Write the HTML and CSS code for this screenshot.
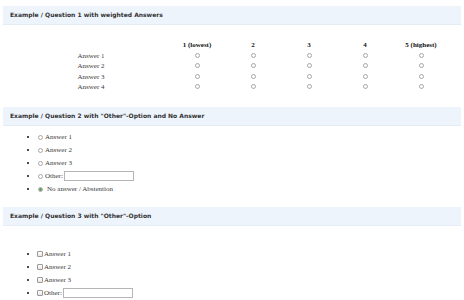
FILE: index.html
```html
<!DOCTYPE html>
<html lang="en">
<head>
  <meta charset="UTF-8">
  <meta name="viewport" content="width=device-width, initial-scale=1.0">
  <title>Survey example</title>
  <link rel="stylesheet" href="styles.css">
</head>
<body>
  <div class="page">
    <div class="question">
      <div class="q-title">Example / Question 1 with weighted Answers</div>
      <table class="matrix">
        <tr>
          <th></th>
          <th>1 (lowest)</th>
          <th>2</th>
          <th>3</th>
          <th>4</th>
          <th>5 (highest)</th>
        </tr>
        <tr>
          <td class="answer">Answer 1</td>
          <td><input type="radio" name="q1a1"></td>
          <td><input type="radio" name="q1a1"></td>
          <td><input type="radio" name="q1a1"></td>
          <td><input type="radio" name="q1a1"></td>
          <td><input type="radio" name="q1a1"></td>
        </tr>
        <tr>
          <td class="answer">Answer 2</td>
          <td><input type="radio" name="q1a2"></td>
          <td><input type="radio" name="q1a2"></td>
          <td><input type="radio" name="q1a2"></td>
          <td><input type="radio" name="q1a2"></td>
          <td><input type="radio" name="q1a2"></td>
        </tr>
        <tr>
          <td class="answer">Answer 3</td>
          <td><input type="radio" name="q1a3"></td>
          <td><input type="radio" name="q1a3"></td>
          <td><input type="radio" name="q1a3"></td>
          <td><input type="radio" name="q1a3"></td>
          <td><input type="radio" name="q1a3"></td>
        </tr>
        <tr>
          <td class="answer">Answer 4</td>
          <td><input type="radio" name="q1a4"></td>
          <td><input type="radio" name="q1a4"></td>
          <td><input type="radio" name="q1a4"></td>
          <td><input type="radio" name="q1a4"></td>
          <td><input type="radio" name="q1a4"></td>
        </tr>
      </table>
    </div>

    <div class="question">
      <div class="q-title">Example / Question 2 with "Other"-Option and No Answer</div>
      <ul class="options">
        <li><label><input type="radio" name="q2">Answer 1</label></li>
        <li><label><input type="radio" name="q2">Answer 2</label></li>
        <li><label><input type="radio" name="q2">Answer 3</label></li>
        <li><label><input type="radio" name="q2">Other:</label><input type="text" class="other-text"></li>
        <li><label class="no-answer"><input type="radio" name="q2" checked>No answer / Abstention</label></li>
      </ul>
    </div>

    <div class="question">
      <div class="q-title">Example / Question 3 with "Other"-Option</div>
      <ul class="options checks">
        <li><label><input type="checkbox">Answer 1</label></li>
        <li><label><input type="checkbox">Answer 2</label></li>
        <li><label><input type="checkbox">Answer 3</label></li>
        <li><label><input type="checkbox">Other:</label><input type="text" class="other-text"></li>
      </ul>
    </div>
  </div>
</body>
</html>
```

FILE: styles.css
```css
body {
  margin: 0;
  font-family: "Liberation Serif", "DejaVu Serif", "Times New Roman", serif;
  font-size: 7px;
  color: #3a3a3a;
  background: #fff;
}
.page {
  padding: 6px 3px 0;
}
.q-title {
  height: 18px;
  line-height: 17px;
  padding-left: 7px;
  background-color: #eef4fc;
  border-bottom: 1px solid #e3ebf6;
  font-family: "DejaVu Sans", Verdana, sans-serif;
  font-size: 6px;
  font-weight: bold;
  color: #333;
}
.matrix {
  margin: 15px 0 14.5px 10px;
  border-collapse: collapse;
  table-layout: fixed;
}
.matrix th, .matrix td {
  height: 10.5px;
  padding: 0;
  width: 56px;
  text-align: center;
  line-height: 10px;
}
.matrix th:first-child, .matrix td.answer {
  width: 156px;
}
.matrix th {
  font-weight: bold;
  color: #111;
}

input[type="radio"], input[type="checkbox"] {
  appearance: none;
  margin: 0;
  vertical-align: middle;
  background: #fff;
}
input[type="radio"] {
  width: 5px;
  height: 5px;
  border: 1px solid #a8a8a8;
  border-radius: 50%;
}
input[type="radio"]:checked {
  background: radial-gradient(circle, #5aa35a 0 1.3px, #fff 1.6px);
}
input[type="checkbox"] {
  width: 6px;
  height: 6px;
  border: 1px solid #999;
  border-radius: 1px;
  background: linear-gradient(#fff, #e6e6e6);
}
.matrix input[type="radio"] {
  position: relative;
  top: -1px;
}

.options {
  margin: 3.7px 0 12px;
  padding-left: 35px;
  list-style: disc;
}
.options li {
  height: 13px;
  line-height: 13px;
}
.options li::marker {
  font-size: 8px;
  color: #111;
}
.options label input {
  margin-right: 2px;
}
.no-answer input {
  margin-right: 4px !important;
}
.checks {
  margin-top: 21px;
}
.checks input[type="checkbox"] {
  margin-left: -1px;
  margin-right: 1px;
}
.other-text {
  width: 70px;
  height: 10px;
  box-sizing: border-box;
  margin: 0 0 0 1px;
  padding: 0 2px;
  border: 1px solid #b5b5b5;
  font-size: 7px;
  vertical-align: middle;
}
```
